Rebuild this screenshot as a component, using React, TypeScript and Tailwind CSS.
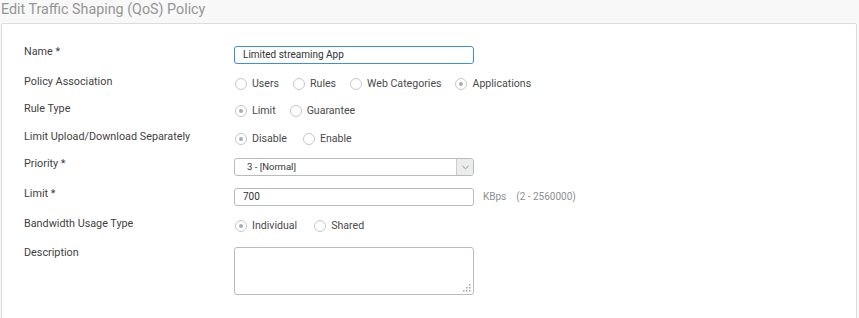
import React from "react";

const font = { fontFamily: "Roboto, 'Liberation Sans', sans-serif" };

function Radio({ label, checked, gap = "mr-[14px]" }: { label: string; checked?: boolean; gap?: string }) {
  return (
    <div className={`flex items-center ${gap}`}>
      <span className="w-[12px] h-[12px] rounded-full border border-[#c5c8cb] bg-white flex items-center justify-center mr-[5px]">
        {checked && <span className="w-[4px] h-[4px] rounded-full bg-[#a9adb1]" />}
      </span>
      <span className="text-[10.6px] text-[#4a4a4a] leading-4">{label}</span>
    </div>
  );
}

function Label({ children, input }: { children: React.ReactNode; input?: boolean }) {
  return (
    <div className={`w-[210px] shrink-0 text-[10.8px] leading-4 text-[#3f3f3f] ${input ? "-mt-[2px]" : "-mt-[2px]"}`}>
      {children}
    </div>
  );
}

export default function App() {
  return (
    <div className="w-[859px] h-[318px] bg-[#f8f8f8] overflow-hidden" style={font}>
      <div className="h-[23px] pl-[1px] text-[14.3px] leading-[18px] text-[#959595]">
        Edit Traffic Shaping (QoS) Policy
      </div>
      <div className="ml-[1px] w-[856px] h-[310px] bg-white border border-[#dcdcdc] rounded-[2px] pl-[22px] pt-[22px]">
        {/* Name */}
        <div className="flex items-start h-[18px]">
          <Label input>Name *</Label>
          <div className="w-[240px] h-[18px] border border-[#3d8fd6] rounded-[3px] px-[8px] text-[10px] leading-[16px] text-[#333]">
            Limited streaming App
          </div>
        </div>
        {/* Policy Association */}
        <div className="flex items-start h-[16px] mt-[12px]">
          <Label>Policy Association</Label>
          <div className="flex items-center h-[16px] pl-[1px]">
            <Radio label="Users" />
            <Radio label="Rules" />
            <Radio label="Web Categories" />
            <Radio label="Applications" checked />
          </div>
        </div>
        {/* Rule type */}
        <div className="flex items-start h-[16px] mt-[11px]">
          <Label>Rule Type</Label>
          <div className="flex items-center h-[16px] pl-[1px]">
            <Radio label="Limit" checked />
            <Radio label="Guarantee" />
          </div>
        </div>
        {/* Limit upload */}
        <div className="flex items-start h-[16px] mt-[12px]">
          <Label>Limit Upload/Download Separately</Label>
          <div className="flex items-center h-[16px] pl-[1px]">
            <Radio label="Disable" checked gap="mr-[16px]" />
            <Radio label="Enable" />
          </div>
        </div>
        {/* Priority */}
        <div className="flex items-start h-[18px] mt-[11px]">
          <Label input>Priority *</Label>
          <div className="w-[240px] h-[18px] border border-[#b7bcc1] rounded-[3px] flex overflow-hidden">
            <div className="flex-1 pl-[12px] text-[9.5px] leading-[16px] text-[#333]">3 - [Normal]</div>
            <div className="w-[17px] h-full bg-[#ececec] border-l border-[#c9cdd1] flex items-center justify-center">
              <svg width="7" height="5" viewBox="0 0 7 5">
                <path d="M0.5 1 L3.5 3.8 L6.5 1" fill="none" stroke="#8a8f94" strokeWidth="1" />
              </svg>
            </div>
          </div>
        </div>
        {/* Limit */}
        <div className="flex items-start h-[18px] mt-[12px]">
          <Label input>Limit *</Label>
          <div className="w-[240px] h-[18px] border border-[#b7bcc1] rounded-[3px] px-[8px] text-[10px] leading-[16px] text-[#333]">
            700
          </div>
          <div className="ml-[9px] text-[10px] leading-[18px] text-[#8a8f94] whitespace-pre">KBps    (2 - 2560000)</div>
        </div>
        {/* Bandwidth */}
        <div className="flex items-start h-[16px] mt-[12px]">
          <Label>Bandwidth Usage Type</Label>
          <div className="flex items-center h-[16px] pl-[1px]">
            <Radio label="Individual" checked gap="mr-[17px]" />
            <Radio label="Shared" />
          </div>
        </div>
        {/* Description */}
        <div className="flex items-start mt-[13px]">
          <Label input>Description</Label>
          <div className="relative w-[240px] h-[48px] border border-[#b7bcc1] rounded-[3px]">
            <svg className="absolute right-[2px] bottom-[2px]" width="8" height="8" viewBox="0 0 8 8">
              <rect x="6" y="0" width="1.5" height="1.5" fill="#a0a4a8" />
              <rect x="3" y="3" width="1.5" height="1.5" fill="#a0a4a8" />
              <rect x="6" y="3" width="1.5" height="1.5" fill="#a0a4a8" />
              <rect x="0" y="6" width="1.5" height="1.5" fill="#a0a4a8" />
              <rect x="3" y="6" width="1.5" height="1.5" fill="#a0a4a8" />
              <rect x="6" y="6" width="1.5" height="1.5" fill="#a0a4a8" />
            </svg>
          </div>
        </div>
      </div>
    </div>
  );
}
